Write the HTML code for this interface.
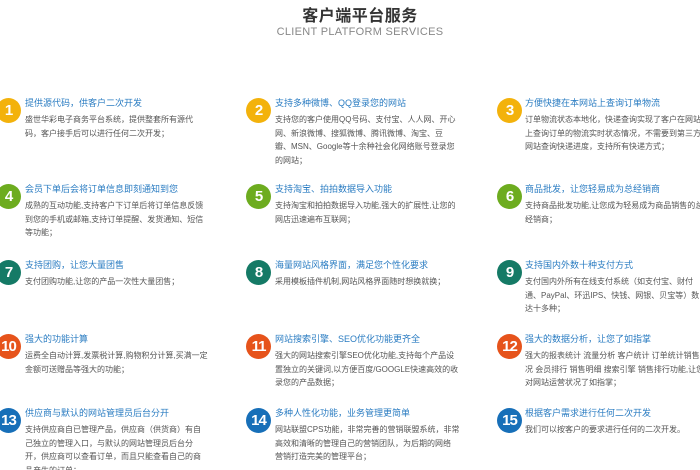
<!DOCTYPE html>
<html><head><meta charset="utf-8"><style>
html,body{margin:0;padding:0;width:700px;height:470px;overflow:hidden;background:#fff;font-family:"Liberation Sans","Noto Sans CJK SC",sans-serif;position:relative}
.h1{position:absolute;left:0;width:720px;top:2px;text-align:center;font-size:16px;font-weight:bold;color:#333;letter-spacing:0.5px}
.h2{position:absolute;left:0;width:720px;top:26px;text-align:center;font-size:11px;color:#888;letter-spacing:0.3px}
.c{position:absolute;width:25px;height:25px;border-radius:50%;color:#fff;font-weight:bold;font-size:15px;line-height:25px;text-align:center;letter-spacing:-1px}
.b{position:absolute;white-space:nowrap}
.t{font-size:9px;color:#2a7cc2;line-height:14px;height:17px}
.d{font-size:8px;color:#555;line-height:13.5px}
.y{background:#f3b20c}.g{background:#6dac1f}.e{background:#157a66}.o{background:#e6531b}.u{background:#176fb8}
</style></head><body>
<div class="h1">客户端平台服务</div>
<div class="h2">CLIENT PLATFORM SERVICES</div>

<div class="c y" style="left:-4px;top:98px">1</div>
<div class="b" style="left:25px;top:96px"><div class="t">提供源代码，供客户二次开发</div><div class="d">盛世华彩电子商务平台系统，提供整套所有源代<br>码，客户接手后可以进行任何二次开发；</div></div>
<div class="c y" style="left:246px;top:98px">2</div>
<div class="b" style="left:275px;top:96px"><div class="t">支持多种微博、QQ登录您的网站</div><div class="d">支持您的客户使用QQ号码、支付宝、人人网、开心<br>网、新浪微博、搜狐微博、腾讯微博、淘宝、豆<br>瓣、MSN、Google等十余种社会化网络账号登录您<br>的网站；</div></div>
<div class="c y" style="left:497px;top:98px">3</div>
<div class="b" style="left:525px;top:96px"><div class="t">方便快捷在本网站上查询订单物流</div><div class="d">订单物流状态本地化，快递查询实现了客户在网站<br>上查询订单的物流实时状态情况，不需要到第三方<br>网站查询快递进度，支持所有快递方式；</div></div>

<div class="c g" style="left:-4px;top:184px">4</div>
<div class="b" style="left:25px;top:182px"><div class="t">会员下单后会将订单信息即刻通知到您</div><div class="d">成熟的互动功能,支持客户下订单后将订单信息反馈<br>到您的手机或邮箱,支持订单提醒、发货通知、短信<br>等功能；</div></div>
<div class="c g" style="left:246px;top:184px">5</div>
<div class="b" style="left:275px;top:182px"><div class="t">支持淘宝、拍拍数据导入功能</div><div class="d">支持淘宝和拍拍数据导入功能,强大的扩展性,让您的<br>网店迅速遍布互联网；</div></div>
<div class="c g" style="left:497px;top:184px">6</div>
<div class="b" style="left:525px;top:182px"><div class="t">商品批发，让您轻易成为总经销商</div><div class="d">支持商品批发功能,让您成为轻易成为商品销售的总<br>经销商；</div></div>

<div class="c e" style="left:-4px;top:260px">7</div>
<div class="b" style="left:25px;top:258px"><div class="t">支持团购，让您大量团售</div><div class="d">支付团购功能,让您的产品一次性大量团售；</div></div>
<div class="c e" style="left:246px;top:260px">8</div>
<div class="b" style="left:275px;top:258px"><div class="t">海量网站风格界面，满足您个性化要求</div><div class="d">采用模板插件机制,网站风格界面随时想换就换；</div></div>
<div class="c e" style="left:497px;top:260px">9</div>
<div class="b" style="left:525px;top:258px"><div class="t">支持国内外数十种支付方式</div><div class="d">支付国内外所有在线支付系统（如支付宝、财付<br>通、PayPal、环迅IPS、快钱、网银、贝宝等）数<br>达十多种；</div></div>

<div class="c o" style="left:-4px;top:334px">10</div>
<div class="b" style="left:25px;top:332px"><div class="t">强大的功能计算</div><div class="d">运费全自动计算,发票税计算,购物积分计算,买满一定<br>金额可送赠品等强大的功能；</div></div>
<div class="c o" style="left:246px;top:334px">11</div>
<div class="b" style="left:275px;top:332px"><div class="t">网站搜索引擎、SEO优化功能更齐全</div><div class="d">强大的网站搜索引擎SEO优化功能,支持每个产品设<br>置独立的关键词,以方便百度/GOOGLE快速高效的收<br>录您的产品数据；</div></div>
<div class="c o" style="left:497px;top:334px">12</div>
<div class="b" style="left:525px;top:332px"><div class="t">强大的数据分析，让您了如指掌</div><div class="d">强大的报表统计 流量分析 客户统计 订单统计销售概<br>况 会员排行 销售明细 搜索引擎 销售排行功能,让您<br>对网站运营状况了如指掌；</div></div>

<div class="c u" style="left:-4px;top:408px">13</div>
<div class="b" style="left:25px;top:406px"><div class="t">供应商与默认的网站管理员后台分开</div><div class="d">支持供应商自已管理产品，供应商（供货商）有自<br>己独立的管理入口，与默认的网站管理员后台分<br>开，供应商可以查看订单，而且只能查看自己的商<br>品产生的订单；</div></div>
<div class="c u" style="left:246px;top:408px">14</div>
<div class="b" style="left:275px;top:406px"><div class="t">多种人性化功能，业务管理更简单</div><div class="d">网站联盟CPS功能，非常完善的营销联盟系统，非常<br>高效和清晰的管理自己的营销团队，为后期的网络<br>营销打造完美的管理平台；</div></div>
<div class="c u" style="left:497px;top:408px">15</div>
<div class="b" style="left:525px;top:406px"><div class="t">根据客户需求进行任何二次开发</div><div class="d">我们可以按客户的要求进行任何的二次开发。</div></div>
</body></html>
